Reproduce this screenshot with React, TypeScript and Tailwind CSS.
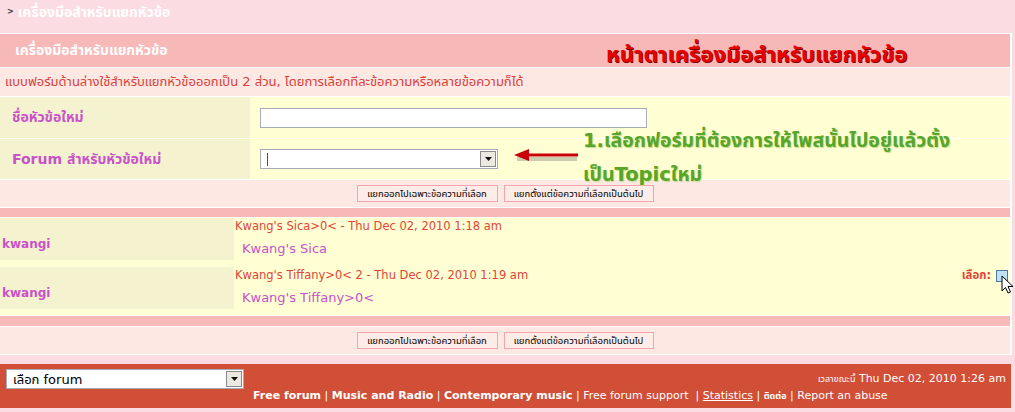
const font = "font-['Tahoma','DejaVu_Sans','Noto_Sans','Noto_Sans_Thai',sans-serif]"

function FakeSelect({ width, text, caret }: { width: string; text?: string; caret?: boolean }) {
  return (
    <div className={`${width} h-[20px] bg-white border border-[#a5acb5] flex items-center`}>
      <div className="flex-1 pl-[6px] text-[13px] text-black leading-none">
        {caret && <span className="inline-block w-px h-[13px] bg-[#3050a0] align-middle" />}
        {text}
      </div>
      <div className="w-[16px] h-[16px] mr-px bg-[#ece9e0] border border-[#8a8a8a] flex items-center justify-center">
        <svg width="7" height="4" viewBox="0 0 7 4">
          <path d="M0 0h7L3.5 4z" fill="#111" />
        </svg>
      </div>
    </div>
  )
}

function Buttons() {
  return (
    <div className="h-[27px] bg-[#fde8e4] flex items-center justify-center gap-[6px]">
      <button className="w-[141px] h-[17px] border border-[#f2a5ad] bg-[#fdece8] text-[9.5px] text-black leading-none">
        แยกออกไปเฉพาะข้อความที่เลือก
      </button>
      <button className="w-[150px] h-[17px] border border-[#f2a5ad] bg-[#fdece8] text-[9.5px] text-black leading-none">
        แยกตั้งแต่ข้อความที่เลือกเป็นต้นไป
      </button>
    </div>
  )
}

function Post({ name, meta, body, select }: { name: string; meta: string; body: string; select?: boolean }) {
  return (
    <div className="flex h-[42px]">
      <div className="w-[234px] bg-[#f5f3cf] flex items-center pl-[2px] pt-[10px] text-[12px] font-bold text-[#c952c9]">
        {name}
      </div>
      <div className="flex-1 pl-px flex flex-col">
        <div className="flex items-center h-[18px] text-[11.5px] text-[#e0453a]">
          <span>{meta}</span>
          {select && (
            <span className="ml-auto flex items-center gap-[5px] pr-[2px]">
              <span className="font-bold">เลือก:</span>
              <span className="relative w-[12px] h-[12px] border border-[#4f7a9a] bg-[#bfe0f8]">
                <svg className="absolute left-[4px] top-[4px]" width="13" height="19" viewBox="0 0 13 19">
                  <path d="M1 1v15l3.5-3.5 2.5 5.5 2.5-1-2.5-5.5h5z" fill="#fff" stroke="#000" strokeWidth="1" />
                </svg>
              </span>
            </span>
          )}
        </div>
        <div className="pl-[7px] pt-[3px] text-[13px] text-[#c952c9]">{body}</div>
      </div>
    </div>
  )
}

export default function App() {
  return (
    <div className={`${font} w-[1015px] h-[412px] bg-[#fcdce3] overflow-hidden`}>
      <div className="h-[33px] flex items-center pl-[7px] pb-[9px] text-white text-[14px] font-bold">
        <span className="text-[8px] text-[#333] mr-[4px]">&gt;</span>
        เครื่องมือสำหรับแยกหัวข้อ
      </div>

      <div className="relative w-[1012px] bg-white pt-px pr-[2px] pb-px flex flex-col gap-px">
        <div className="h-[33px] bg-[#f7b8b8] flex items-center pl-[15px] text-white text-[14px] font-bold">
          เครื่องมือสำหรับแยกหัวข้อ
        </div>
        <div className="h-[28px] bg-[#fde8e4] flex items-center pl-[5px] text-[13px] text-[#d8403a]">
          แบบฟอร์มด้านล่างใช้สำหรับแยกหัวข้อออกเป็น 2 ส่วน, โดยการเลือกทีละข้อความหรือหลายข้อความก็ได้
        </div>
        <div className="flex h-[41px]">
          <div className="w-[250px] bg-[#f5f3cf] flex items-center pl-[12px] text-[14px] font-bold text-[#c952c9]">
            ชื่อหัวข้อใหม่
          </div>
          <div className="flex-1 bg-[#ffffd3] flex items-center pl-[10px]">
            <div className="w-[387px] h-[20px] bg-white border border-[#a5acb5]" />
          </div>
        </div>
        <div className="flex h-[40px]">
          <div className="w-[250px] bg-[#f5f3cf] flex items-center pl-[12px] text-[14px] font-bold text-[#c952c9]">
            Forum สำหรับหัวข้อใหม่
          </div>
          <div className="flex-1 bg-[#ffffd3] flex items-center pl-[10px]">
            <FakeSelect width="w-[238px]" caret />
          </div>
        </div>
        <Buttons />
        <div className="h-[9px] bg-[#f7b8b8]" />
        <div className="bg-[#ffffd3] flex flex-col gap-[7px] pb-[6px]">
          <Post name="kwangi" meta="Kwang's Sica>0< - Thu Dec 02, 2010 1:18 am" body="Kwang's Sica" />
          <Post name="kwangi" meta="Kwang's Tiffany>0< 2 - Thu Dec 02, 2010 1:19 am" body="Kwang's Tiffany>0<" select />
        </div>
        <div className="h-[10px] bg-[#f7b8b8]" />
        <Buttons />

        {/* annotations */}
        <div className="absolute left-[606px] top-[5px] text-[22px] font-bold text-[#e60000] [text-shadow:1px_1px_0_#7a0000]">
          หน้าตาเครื่องมือสำหรับแยกหัวข้อ
        </div>
        <div className="absolute left-[583px] top-[91px] text-[19.5px] leading-[34px] font-bold text-[#55a62a] [text-shadow:1px_1px_1px_#c8d890]">
          1.เลือกฟอร์มที่ต้องการให้โพสนั้นไปอยู่แล้วตั้ง
          <br />
          เป็นTopicใหม่
        </div>
        <svg className="absolute left-[512px] top-[116px]" width="70" height="16" viewBox="0 0 70 16">
          <path d="M5 10h60" stroke="#9a9a8a" strokeWidth="4" opacity="0.5" />
          <path d="M16 6h50" stroke="#c8000a" strokeWidth="3" />
          <path d="M2 6l15-6v12z" fill="#c8000a" />
        </svg>
      </div>

      <div className="h-[9px]" />
      <div className="w-[1011px] h-[44px] bg-[#d14e37] flex">
        <div className="pl-[6px] pt-[5px]">
          <FakeSelect width="w-[238px]" text="เลือก forum" />
        </div>
        <div className="flex-1 pl-[9px] pr-[5px] pt-[7px] text-[11px] text-white">
          <div className="text-right h-[17px]">
            <span className="text-[9px]">เวลาขณะนี้</span> Thu Dec 02, 2010 1:26 am
          </div>
          <div>
            <span className="font-bold">Free forum</span> | <span className="font-bold">Music and Radio</span> |{' '}
            <span className="font-bold">Contemporary music</span> | Free forum support&nbsp; | <span className="underline">Statistics</span> |{' '}
            <span className="font-bold text-[9px]">ติดต่อ</span> | Report an abuse
          </div>
        </div>
      </div>
    </div>
  )
}
